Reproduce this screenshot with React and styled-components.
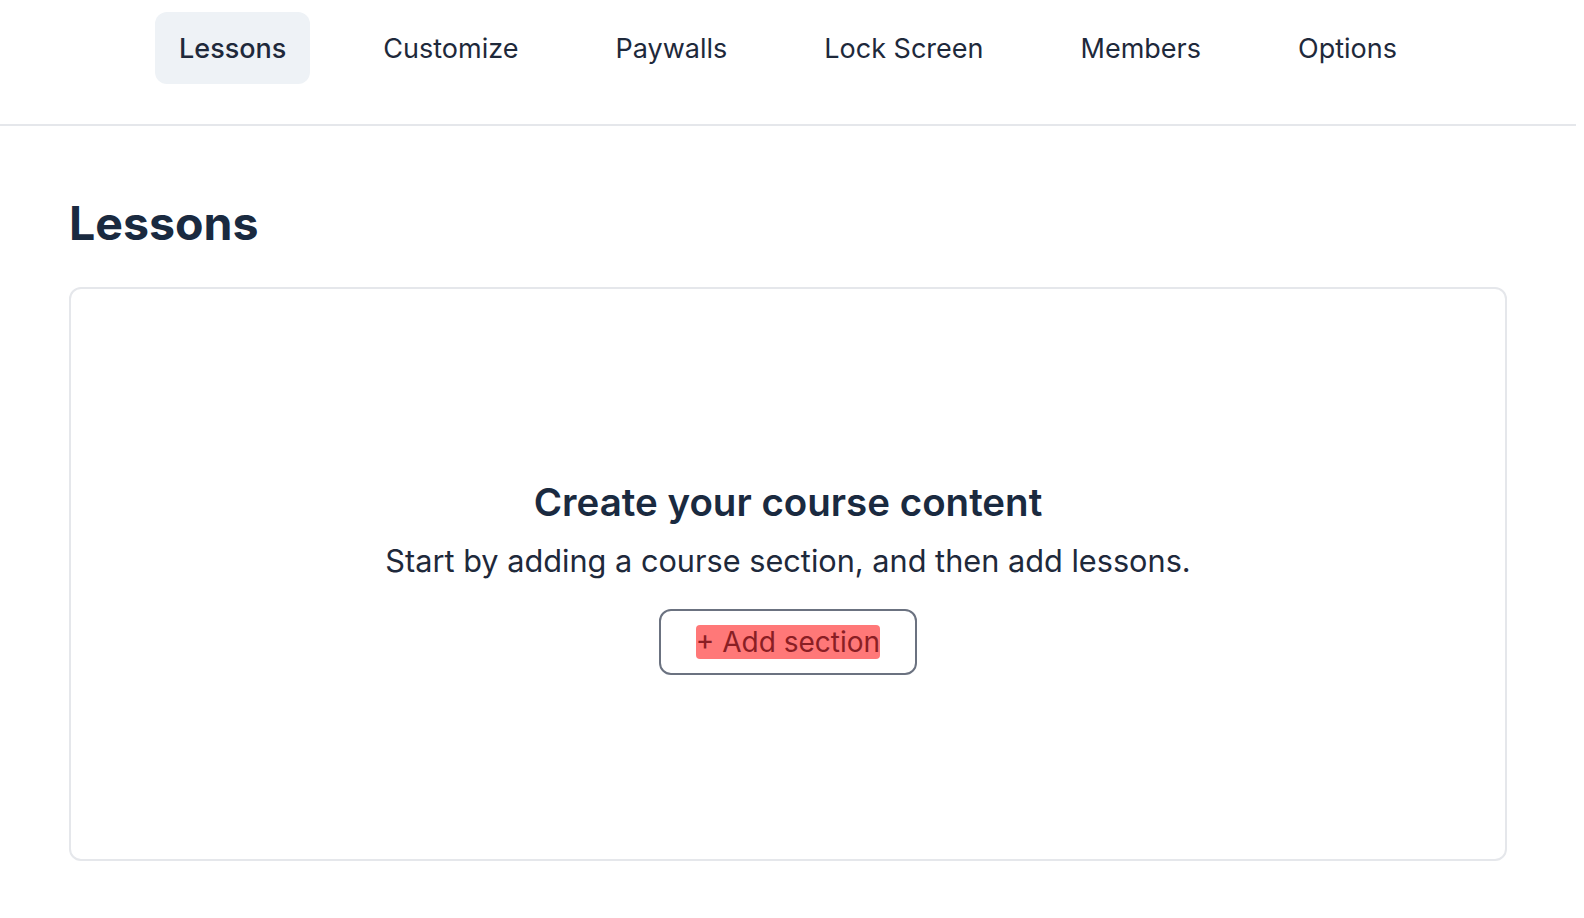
import React from "react";
import styled, { createGlobalStyle } from "styled-components";

const GlobalStyle = createGlobalStyle`
  * { box-sizing: border-box; }
  html, body { margin: 0; padding: 0; background: #ffffff; }
  body {
    font-family: Inter, "Noto Sans", "Liberation Sans", sans-serif;
    color: #1e293b;
  }
`;

const Page = styled.div`
  width: 1576px;
  min-height: 918px;
`;

const Header = styled.header`
  display: flex;
  justify-content: center;
  padding: 12px 0 40px;
  border-bottom: 2px solid #e5e7eb;
`;

const Nav = styled.nav`
  display: flex;
  align-items: center;
  gap: 49px;
`;

const NavItem = styled.a`
  display: block;
  padding: 19px 24px 17px;
  line-height: 36px;
  font-size: 27px;
  font-weight: ${(p) => (p.$active ? 500 : 400)};
  color: #1e293b;
  text-decoration: none;
  border-radius: 12px;
  background: ${(p) => (p.$active ? "#eef2f6" : "transparent")};
  cursor: pointer;
`;

const Main = styled.main`
  padding: 69px 69px 0 69px;
`;

const Title = styled.h1`
  margin: 0 0 36px;
  font-size: 46.5px;
  line-height: 56px;
  font-weight: 700;
  color: #1a2a40;
`;

const Card = styled.section`
  height: 574px;
  padding-top: 6px;
  border: 2px solid #e5e7eb;
  border-radius: 12px;
  display: flex;
  flex-direction: column;
  align-items: center;
  justify-content: center;
`;

const EmptyTitle = styled.h2`
  margin: 0;
  font-size: 38.5px;
  line-height: 46px;
  font-weight: 600;
  color: #1a2a40;
`;

const EmptyText = styled.p`
  margin: 17px 0 0;
  font-size: 30.7px;
  line-height: 37px;
  font-weight: 400;
  color: #1e293b;
`;

const OutlineButton = styled.button`
  margin-top: 30px;
  padding: 14px 35px;
  border: 2px solid #6b7280;
  border-radius: 12px;
  background: #ffffff;
  font-family: inherit;
  font-size: 28px;
  color: #1e293b;
  cursor: pointer;
  display: flex;
  align-items: center;
`;

const Highlight = styled.span`
  display: inline-block;
  line-height: 34px;
  background: #ff7878;
  color: #8a1e24;
  border-radius: 4px;
`;

const tabs = ["Lessons", "Customize", "Paywalls", "Lock Screen", "Members", "Options"];

export default function App() {
  return (
    <Page>
      <GlobalStyle />
      <Header>
        <Nav>
          {tabs.map((t) => (
            <NavItem key={t} $active={t === "Lessons"}>
              {t}
            </NavItem>
          ))}
        </Nav>
      </Header>
      <Main>
        <Title>Lessons</Title>
        <Card>
          <EmptyTitle>Create your course content</EmptyTitle>
          <EmptyText>Start by adding a course section, and then add lessons.</EmptyText>
          <OutlineButton>
            <Highlight>+ Add section</Highlight>
          </OutlineButton>
        </Card>
      </Main>
    </Page>
  );
}
